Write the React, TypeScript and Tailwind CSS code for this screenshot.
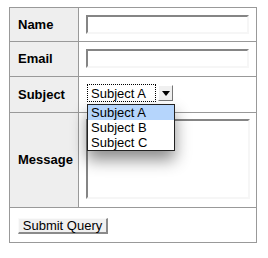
import React from "react";

const font = { fontFamily: '"Liberation Sans", Arial, sans-serif' };

function FakeInput({ className }: { className: string }) {
  return (
    <div
      className={`bg-white border-t-2 border-l-2 border-r-2 border-b-2 border-t-[#858585] border-l-[#858585] border-r-[#f6f6f6] border-b-[#f6f6f6] ${className}`}
    />
  );
}

export default function App() {
  return (
    <div className="w-[268px] h-[258px] bg-white pt-[7px] pl-[9px]" style={font}>
      <div className="w-[248px] grid grid-cols-[68px_177px] gap-px bg-[#999] p-px text-[13px] text-black">
        {/* Name */}
        <div className="bg-[#eeeeee] h-[33px] flex items-center pl-[8px] font-bold">Name</div>
        <div className="bg-white h-[33px] pl-[7px] pt-[7px]">
          <FakeInput className="w-[163px] h-[19px]" />
        </div>
        {/* Email */}
        <div className="bg-[#eeeeee] h-[34px] flex items-center pl-[8px] font-bold">Email</div>
        <div className="bg-white h-[34px] pl-[7px] pt-[7px]">
          <FakeInput className="w-[163px] h-[19px]" />
        </div>
        {/* Subject */}
        <div className="bg-[#eeeeee] h-[35px] flex items-center pl-[8px] font-bold">Subject</div>
        <div className="bg-white h-[35px] pl-[8px] pt-[7px] relative z-10">
          <div className="relative w-[86px] h-[18px] flex items-stretch">
            <div className="flex-1 border border-dotted border-black flex items-center pl-[3px] leading-none bg-white">
              Subject A
            </div>
            <div className="w-[15px] ml-[2px] mt-px mb-px bg-[#f0f0f0] border-t border-l border-t-white border-l-white border-r border-b border-r-[#777] border-b-[#777] flex items-center justify-center">
              <svg width="8" height="5" viewBox="0 0 8 5">
                <polygon points="0,0 8,0 4,5" fill="#000" />
              </svg>
            </div>
            <div className="absolute left-0 top-[20px] w-[88px] bg-white border border-[#222] shadow-[0_9px_16px_rgba(0,0,0,0.45)] leading-[15px]">
              <div className="bg-[#b5d5fc] pl-[3px] h-[15px]">Subject A</div>
              <div className="pl-[3px] h-[15px]">Subject B</div>
              <div className="pl-[3px] h-[15px]">Subject C</div>
            </div>
          </div>
        </div>
        {/* Message */}
        <div className="bg-[#eeeeee] h-[94px] flex items-center pl-[8px] font-bold">Message</div>
        <div className="bg-white h-[94px] pl-[7px] pt-[6px]">
          <FakeInput className="w-[164px] h-[80px]" />
        </div>
        {/* Submit */}
        <div className="col-span-2 bg-white h-[34px] pl-[8px] pt-[10px]">
          <div className="w-[90px] h-[16px] bg-[#f0f0f0] border-t border-l border-t-[#fafafa] border-l-[#fafafa] border-r-2 border-b-2 border-r-[#8a8a8a] border-b-[#8a8a8a] flex items-center justify-center leading-none">
            Submit Query
          </div>
        </div>
      </div>
    </div>
  );
}
